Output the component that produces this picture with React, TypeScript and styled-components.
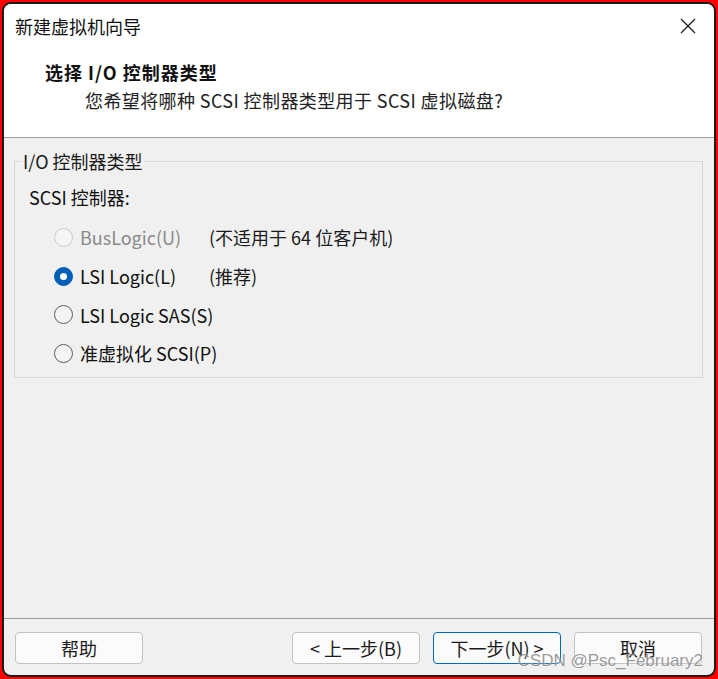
import React from "react";
import styled, { createGlobalStyle } from "styled-components";

const GlobalStyle = createGlobalStyle`
  html, body {
    margin: 0;
    padding: 0;
    background: #ff0000;
  }
  body {
    font-family: "Noto Sans CJK SC", "Noto Sans", sans-serif;
    color: #1a1a1a;
  }
`;

const Page = styled.div`
  position: relative;
  width: 718px;
  height: 679px;
  box-sizing: border-box;
  padding: 2px;
  background: #ff0000;
`;

const Window = styled.div`
  box-sizing: border-box;
  height: 100%;
  border: 2px solid #1b1b1b;
  border-radius: 9px;
  overflow: hidden;
  display: flex;
  flex-direction: column;
  background: #f0f0f0;
`;

const Header = styled.div`
  height: 133px;
  background: #ffffff;
  border-bottom: 1px solid #a0a0a0;
  display: flex;
  flex-direction: column;
`;

const TitleBar = styled.div`
  display: flex;
  align-items: center;
  justify-content: space-between;
  height: 24px;
  margin-top: 10px;
  padding: 0 14px 0 11px;
`;

const Title = styled.span`
  font-size: 18px;
  line-height: 24px;
  color: #111;
`;

const CloseButton = styled.button`
  display: flex;
  align-items: center;
  justify-content: center;
  width: 24px;
  height: 24px;
  padding: 0;
  border: none;
  background: transparent;
`;

const Heading = styled.div`
  margin: 22px 0 0 41px;
  font-size: 18px;
  line-height: 24px;
  font-weight: 700;
  letter-spacing: 1px;
  color: #111;
`;

const Subtitle = styled.div`
  margin: 4px 0 0 81px;
  font-size: 18px;
  line-height: 24px;
  letter-spacing: 0.4px;
  color: #222;
`;

const Body = styled.div`
  flex: 1;
  padding: 11px 11px 0 10px;
`;

const Group = styled.fieldset`
  margin: 0;
  padding: 0 0 4px 0;
  border: 1px solid #d9d9d9;
  min-width: 0;
`;

const Legend = styled.legend`
  margin-left: 6px;
  padding: 0 2px;
  font-size: 18px;
  line-height: 24px;
  color: #1a1a1a;
`;

const GroupLabel = styled.div`
  margin: 12px 0 0 14px;
  font-size: 18px;
  line-height: 24px;
  color: #111;
`;

const Options = styled.div`
  display: flex;
  flex-direction: column;
  margin-top: 9px;
  padding-left: 39px;
`;

const OptionRow = styled.label`
  display: grid;
  grid-template-columns: 26px 129px auto;
  align-items: center;
  height: 38.7px;
`;

const Radio = styled.span<{ $state: "checked" | "unchecked" | "disabled" }>`
  box-sizing: border-box;
  width: 19px;
  height: 19px;
  border-radius: 50%;
  display: flex;
  align-items: center;
  justify-content: center;
  border: 1px solid
    ${(p) =>
      p.$state === "checked"
        ? "#005fb8"
        : p.$state === "disabled"
        ? "#cbcbcb"
        : "#5f5f5f"};
  background: ${(p) =>
    p.$state === "checked"
      ? "#005fb8"
      : p.$state === "disabled"
      ? "#f5f5f5"
      : "#f4f4f4"};

  &::after {
    content: "";
    display: ${(p) => (p.$state === "checked" ? "block" : "none")};
    width: 7px;
    height: 7px;
    border-radius: 50%;
    background: #ffffff;
  }
`;

const OptionText = styled.span<{ $disabled?: boolean }>`
  font-size: 18px;
  line-height: 24px;
  color: ${(p) => (p.$disabled ? "#8a8a8a" : "#111")};
  white-space: nowrap;
`;

const Note = styled.span`
  font-size: 18px;
  line-height: 24px;
  color: #1a1a1a;
  white-space: nowrap;
`;

const Footer = styled.div`
  height: 57px;
  box-sizing: border-box;
  border-top: 1px solid #a0a0a0;
  padding: 13px 12px 12px 11px;
  display: flex;
  gap: 13px;
`;

const Spacer = styled.div`
  flex: 1;
`;

const Button = styled.button<{ $primary?: boolean }>`
  box-sizing: border-box;
  width: 128px;
  height: 32px;
  border-radius: 4px;
  border: 1px solid ${(p) => (p.$primary ? "#0067c0" : "#c2c2c2")};
  background: #fbfbfb;
  font-family: "Noto Sans CJK SC", "Noto Sans", sans-serif;
  font-size: 18px;
  line-height: 22px;
  color: #1a1a1a;
  padding: 0;
`;

const Watermark = styled.div`
  position: absolute;
  right: 15px;
  bottom: 7px;
  font-family: "Liberation Sans", Arial, sans-serif;
  font-size: 17px;
  line-height: 22px;
  color: rgba(120, 120, 120, 0.75);
  text-shadow: 0 0 2px rgba(255, 255, 255, 0.8);
  pointer-events: none;
`;

type Option = {
  label: string;
  note?: string;
  state: "checked" | "unchecked" | "disabled";
};

const options: Option[] = [
  { label: "BusLogic(U)", note: "(不适用于 64 位客户机)", state: "disabled" },
  { label: "LSI Logic(L)", note: "(推荐)", state: "checked" },
  { label: "LSI Logic SAS(S)", state: "unchecked" },
  { label: "准虚拟化 SCSI(P)", state: "unchecked" },
];

function CloseIcon() {
  return (
    <svg width="16" height="16" viewBox="0 0 16 16">
      <path d="M1 1 L15 15 M15 1 L1 15" stroke="#1a1a1a" strokeWidth="1.3" fill="none" />
    </svg>
  );
}

export default function App() {
  return (
    <>
      <GlobalStyle />
      <Page>
        <Window>
          <Header>
            <TitleBar>
              <Title>新建虚拟机向导</Title>
              <CloseButton aria-label="关闭">
                <CloseIcon />
              </CloseButton>
            </TitleBar>
            <Heading>选择 I/O 控制器类型</Heading>
            <Subtitle>您希望将哪种 SCSI 控制器类型用于 SCSI 虚拟磁盘?</Subtitle>
          </Header>

          <Body>
            <Group>
              <Legend>I/O 控制器类型</Legend>
              <GroupLabel>SCSI 控制器:</GroupLabel>
              <Options>
                {options.map((o) => (
                  <OptionRow key={o.label}>
                    <Radio $state={o.state} />
                    <OptionText $disabled={o.state === "disabled"}>{o.label}</OptionText>
                    {o.note ? <Note>{o.note}</Note> : <span />}
                  </OptionRow>
                ))}
              </Options>
            </Group>
          </Body>

          <Footer>
            <Button>帮助</Button>
            <Spacer />
            <Button>&lt; 上一步(B)</Button>
            <Button $primary>下一步(N) &gt;</Button>
            <Button>取消</Button>
          </Footer>
        </Window>
        <Watermark>CSDN @Psc_February2</Watermark>
      </Page>
    </>
  );
}
